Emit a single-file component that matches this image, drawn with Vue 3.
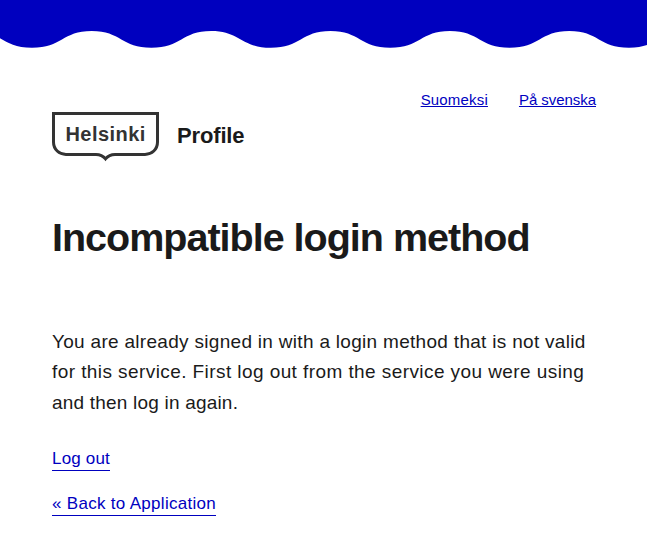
<script setup>
const languages = [
  { code: 'fi', label: 'Suomeksi' },
  { code: 'sv', label: 'På svenska' },
]
const message = [
  'You are already signed in with a login method that is not valid',
  'for this service. First log out from the service you were using',
  'and then log in again.',
]
</script>

<template>
  <div class="page">
    <svg class="wave" width="647" height="50" viewBox="0 0 647 50" aria-hidden="true">
      <path
        d="M0 0H688.7V31C659.5 31 658.9 47.8 629 47.8S598.8 31 569.3 31S539.5 47.8 509.6 47.8S479.4 31 449.9 31S420.1 47.8 390.2 47.8S360 31 330.5 31S300.7 47.8 270.8 47.8S240.6 31 211.1 31S181.3 47.8 151.4 47.8S121.2 31 91.7 31S61.9 47.8 32 47.8S1.8 31 -27.7 31V0Z"
      />
    </svg>
    <nav class="languages">
      <a v-for="l in languages" :key="l.code" :class="l.code">{{ l.label }}</a>
    </nav>
    <header class="brand">
      <svg class="logo" width="107" height="50" viewBox="0 0 107 50" role="img">
        <path
          d="M1.5 1.5H105.5V30C105.5 37.5 99.8 42.4 93 42.4H63C59 42.4 55.8 44 53.5 46.8C51.2 44 48 42.4 44 42.4H14C7.2 42.4 1.5 37.5 1.5 30Z"
        />
        <text x="13.4" y="29" textLength="80">Helsinki</text>
      </svg>
      <span class="name">Profile</span>
    </header>
    <main>
      <h1>Incompatible login method</h1>
      <p class="message">
        <span v-for="(line, i) in message" :key="i" :class="'line' + i">{{ line }}</span>
      </p>
      <div class="actions">
        <a class="logout">Log out</a>
        <a class="back">« Back to Application</a>
      </div>
    </main>
  </div>
</template>

<style>
body {
  background: #fff;
  overflow: hidden;
}
</style>

<style scoped>
.page {
  width: 647px;
  height: 555px;
  overflow: hidden;
  font-family: "Liberation Sans", Arial, sans-serif;
  color: #1a1a1a;
}
.wave {
  display: block;
  fill: #0000bf;
}
a {
  color: #0000bf;
  white-space: nowrap;
}
.languages {
  display: flex;
  justify-content: flex-end;
  gap: 31px;
  padding: 40px 51px 0 0;
  height: 22px;
  font-size: 15px;
  line-height: 20px;
}
.languages a {
  text-decoration: underline;
  text-decoration-thickness: 1px;
  text-underline-offset: 1px;
}
.fi {
  letter-spacing: 0.18px;
}
.sv {
  letter-spacing: -0.05px;
}
.brand {
  display: flex;
  gap: 18px;
  padding-left: 52px;
}
.logo {
  display: block;
}
.logo path {
  fill: none;
  stroke: #333;
  stroke-width: 3;
}
.logo text {
  fill: #333;
  font-size: 20px;
  font-weight: 700;
}
.name {
  font-size: 22px;
  font-weight: 700;
  line-height: 47px;
  letter-spacing: -0.15px;
}
main {
  padding: 50px 0 0 52px;
}
h1 {
  margin: 0;
  font-size: 39.5px;
  line-height: 50px;
  letter-spacing: -1px;
  white-space: nowrap;
}
.message {
  display: flex;
  flex-direction: column;
  margin: 65px 0 0;
  font-size: 19px;
  line-height: 30.4px;
  white-space: nowrap;
}
.line0 {
  letter-spacing: 0.3px;
}
.line1 {
  letter-spacing: 0.42px;
}
.line2 {
  letter-spacing: 0.2px;
}
.actions {
  display: flex;
  flex-direction: column;
  align-items: flex-start;
  gap: 20px;
  padding-top: 28px;
  font-size: 17px;
  line-height: 22px;
}
.actions a {
  padding-top: 2px;
  border-bottom: 1px solid #0000bf;
}
.logout {
  letter-spacing: 0.18px;
}
.back {
  letter-spacing: 0.3px;
}
</style>
